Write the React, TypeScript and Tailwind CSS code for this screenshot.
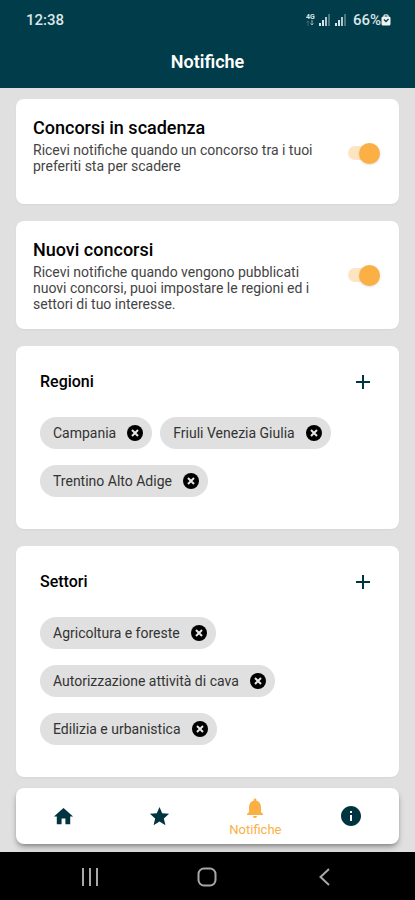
import { useState } from "react";
import type { ReactNode } from "react";
import { MdAdd, MdHome, MdInfo, MdNotifications, MdStar } from "react-icons/md";

function SignalIcon() {
  return (
    <svg width="12" height="12" viewBox="0 0 12 12" aria-hidden="true">
      <rect x="0" y="9" width="2" height="3" fill="#dbe5e8" />
      <rect x="3" y="6" width="2" height="6" fill="#dbe5e8" />
      <rect x="6" y="3" width="2" height="9" fill="#b5c8cd" />
      <rect x="9" y="0" width="2" height="12" fill="#4f7680" />
    </svg>
  );
}

function RemoveIcon() {
  return (
    <svg width="18" height="18" viewBox="0 0 18 18" aria-hidden="true">
      <circle cx="9" cy="9" r="8" fill="#000000" />
      <path d="M6 6l6 6M12 6l-6 6" stroke="#e8e8e8" strokeWidth="2" />
    </svg>
  );
}

function StatusBar() {
  return (
    <div className="flex h-10 items-center justify-between pr-6 pl-[26px] text-[15px] font-medium text-[#dbe5e8]">
      <span>12:38</span>
      <div className="flex items-center">
        <div className="mr-1 flex flex-col items-center">
          <span className="text-[7px] leading-[6px] font-bold">4G</span>
          <svg width="8" height="6" viewBox="0 0 8 6" aria-hidden="true">
            <path d="M2 6V1M.5 2.500 2 1l1.500 1.500" stroke="#3c6772" fill="none" />
            <path d="M6 0v5M4.500 3.500 6 5l1.500-1.500" stroke="#9db4ba" fill="none" />
          </svg>
        </div>
        <SignalIcon />
        <span className="w-1" />
        <SignalIcon />
        <span className="ml-1.5">66%</span>
        <svg width="10" height="12" viewBox="0 0 10 12" aria-hidden="true">
          <path d="M3 3V1.800Q3 .8 5 .8t2 1V3" fill="none" stroke="#dbe5e8" strokeWidth="1.200" />
          <rect x="0.500" y="2.500" width="9" height="9" rx="1.500" fill="#eef3f4" />
          <path d="M3 5.500 5 7.500l2.500-2.500" fill="none" stroke="#003c49" strokeWidth="1.300" />
        </svg>
      </div>
    </div>
  );
}

function ToggleCard({ id, title, children }: { id: string; title: string; children: ReactNode }) {
  const [on, setOn] = useState(true);
  return (
    <section className="flex items-start justify-between rounded-lg bg-white pt-[19px] pr-[19px] pb-[17px] pl-[17px] shadow-xs">
      <div className="min-h-[69px] max-w-[296px]">
        <h2 className="text-lg leading-5 font-medium text-black">
          <label htmlFor={id}>{title}</label>
        </h2>
        <p className="mt-1 text-sm leading-4 text-[#444444]">{children}</p>
      </div>
      <input
        id={id}
        type="checkbox"
        role="switch"
        checked={on}
        onChange={() => setOn(!on)}
        className="mt-7 flex h-3.5 w-8 shrink-0 appearance-none items-center justify-start rounded-full bg-gray-300 before:size-[21px] before:shrink-0 before:rounded-full before:bg-white before:shadow-sm before:content-[''] checked:justify-end checked:bg-[#fee5c2] checked:before:bg-[#fbb045]"
      />
    </section>
  );
}

function ChipCard({ title, initial, stacked }: { title: string; initial: string[]; stacked?: boolean }) {
  const [items, setItems] = useState(initial);
  return (
    <section className="rounded-lg bg-white px-6 pt-6 pb-8 shadow-xs">
      <div className="flex h-6 items-center justify-between">
        <h2 className="text-base font-medium text-black">{title}</h2>
        <button type="button" aria-label={"Aggiungi " + title} className="text-[#003440]">
          <MdAdd size={24} />
        </button>
      </div>
      <ul className={stacked ? "mt-[23px] flex flex-col items-start gap-4" : "mt-[23px] flex flex-wrap gap-x-2 gap-y-4"}>
        {items.map((item) => (
          <li key={item} className="flex h-8 items-center gap-2.5 rounded-full bg-[#e0e0e0] pr-2 pl-[13px] text-sm text-[#333333]">
            {item}
            <button
              type="button"
              aria-label={"Rimuovi " + item}
              onClick={() => setItems(items.filter((other) => other !== item))}
            >
              <RemoveIcon />
            </button>
          </li>
        ))}
      </ul>
    </section>
  );
}

export default function App() {
  return (
    <div className="flex min-h-screen flex-col bg-[#e0e0e0] font-[Roboto,sans-serif]">
      <header className="h-[88px] bg-[#003c49]">
        <StatusBar />
        <h1 className="pt-2 text-center text-lg leading-7 font-semibold text-white">Notifiche</h1>
      </header>

      <main className="flex flex-1 flex-col gap-[17px] px-4 pt-[11px] pb-2.5">
        <ToggleCard id="scadenza" title="Concorsi in scadenza">
          Ricevi notifiche quando un concorso tra i tuoi preferiti sta per scadere
        </ToggleCard>
        <ToggleCard id="nuovi" title="Nuovi concorsi">
          Ricevi notifiche quando vengono pubblicati nuovi concorsi, puoi impostare le regioni ed i
          settori di tuo interesse.
        </ToggleCard>
        <ChipCard title="Regioni" initial={["Campania", "Friuli Venezia Giulia", "Trentino Alto Adige"]} />
        <ChipCard
          title="Settori"
          stacked
          initial={["Agricoltura e foreste", "Autorizzazione attività di cava", "Edilizia e urbanistica"]}
        />
      </main>

      <nav className="mx-4 mb-2 grid h-14 grid-cols-4 rounded-lg bg-white text-[#003440] shadow-md shadow-black/30">
        <a href="#home" aria-label="Home" className="flex items-center justify-center">
          <MdHome size={23} />
        </a>
        <a href="#preferiti" aria-label="Preferiti" className="flex items-center justify-center">
          <MdStar size={23} />
        </a>
        <a href="#notifiche" aria-current="page" className="flex flex-col items-center pt-2 text-[#fbb045]">
          <MdNotifications size={24} />
          <span className="text-[13px] leading-5">Notifiche</span>
        </a>
        <a href="#info" aria-label="Info" className="flex items-center justify-center">
          <MdInfo size={24} />
        </a>
      </nav>

      <footer className="flex h-12 items-center justify-around bg-black px-8 pt-0.5 text-[#a8a8a8]">
        <button type="button" aria-label="Recenti">
          <svg width="18" height="18" viewBox="0 0 18 18" fill="none" stroke="currentColor" strokeWidth="2">
            <path d="M2 0v18M9 0v18M16 0v18" />
          </svg>
        </button>
        <button type="button" aria-label="Schermata Home">
          <svg width="20" height="20" viewBox="0 0 20 20" fill="none" stroke="currentColor" strokeWidth="2">
            <rect x="1.500" y="1.500" width="17" height="17" rx="5.500" />
          </svg>
        </button>
        <button type="button" aria-label="Indietro">
          <svg width="18" height="18" viewBox="0 0 18 18" fill="none" stroke="currentColor" strokeWidth="2">
            <path d="M13 1 4.500 9 13 17" />
          </svg>
        </button>
      </footer>
    </div>
  );
}
